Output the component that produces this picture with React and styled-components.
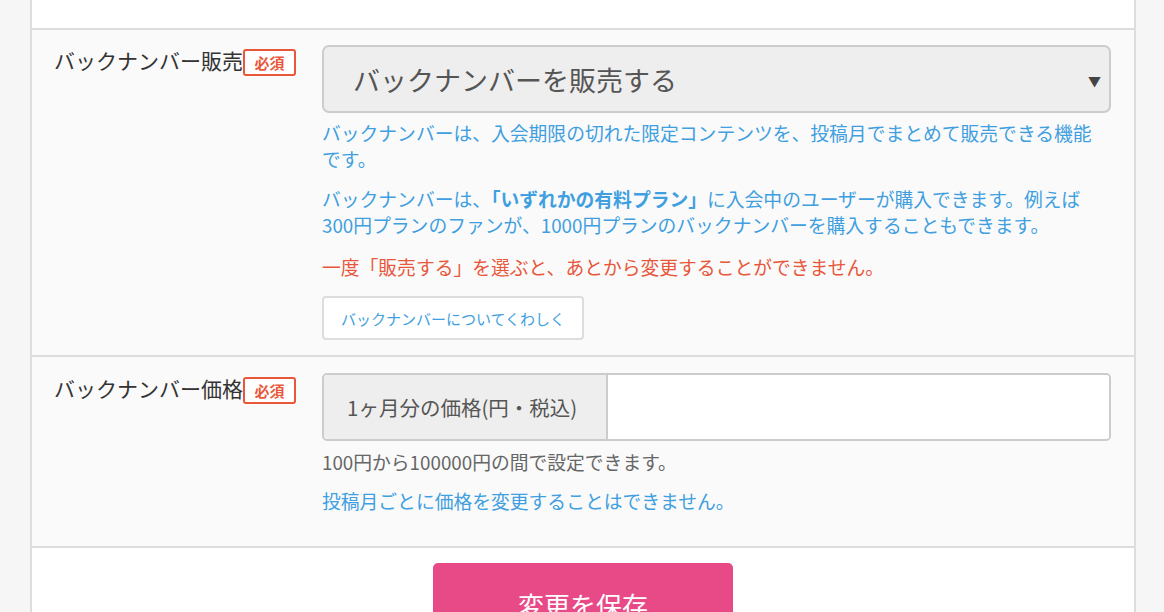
import React from "react";
import styled, { createGlobalStyle } from "styled-components";

const GlobalStyle = createGlobalStyle`
  html, body {
    margin: 0;
    padding: 0;
    background: #f6f6f6;
    font-family: "Noto Sans CJK JP", "Noto Sans", "Liberation Sans", sans-serif;
    color: #333;
  }
`;

const colors = {
  border: "#dddddd",
  blue: "#3f9fe0",
  red: "#e9573a",
  pink: "#e84a88",
  gray: "#666666",
  field: "#eeeeee"
};

const Panel = styled.div`
  box-sizing: border-box;
  width: 1106px;
  margin-left: 30px;
  background: #fff;
  border-left: 2px solid ${colors.border};
  border-right: 2px solid ${colors.border};
  min-height: 612px;
`;

const TopArea = styled.div`
  height: 28px;
  background: #fff;
  border-bottom: 2px solid ${colors.border};
`;

const FormRow = styled.div`
  display: grid;
  grid-template-columns: 290px 789px;
  background: #fafafa;
  border-bottom: 2px solid ${colors.border};
  padding: ${props => props.pad};
`;

const LabelCell = styled.div`
  padding-left: 22px;
  display: flex;
  align-items: flex-start;
  font-size: 21px;
  line-height: 30px;
  color: #333;
  white-space: nowrap;
`;

const Badge = styled.span`
  box-sizing: border-box;
  display: inline-flex;
  align-items: center;
  justify-content: center;
  width: 53px;
  height: 27px;
  margin-top: 4px;
  border: 2px solid ${colors.red};
  border-radius: 3px;
  background: #fff;
  color: ${colors.red};
  font-size: 15px;
  font-weight: 700;
  line-height: 1;
`;

const FieldCell = styled.div`
  display: flex;
  flex-direction: column;
  align-items: flex-start;
`;

const SelectBox = styled.div`
  box-sizing: border-box;
  width: 789px;
  height: 68px;
  display: flex;
  align-items: center;
  justify-content: space-between;
  padding: 0 8px 0 29px;
  background: ${colors.field};
  border: 2px solid #cccccc;
  border-radius: 7px;
  color: #555;
  font-size: 27px;
`;

const Caret = styled.span`
  font-size: 13px;
  color: #444;
  margin-top: 2px;
`;

const Note = styled.p`
  margin: ${props => props.gap}px 0 0;
  font-size: 18.8px;
  line-height: 26px;
  color: ${props => props.color || colors.blue};
  width: 780px;
`;

const Strong = styled.strong`
  font-weight: 700;
`;

const LinkButton = styled.button`
  box-sizing: border-box;
  margin-top: 16px;
  width: 262px;
  height: 44px;
  background: #fff;
  border: 2px solid ${colors.border};
  border-radius: 4px;
  color: ${colors.blue};
  font-family: inherit;
  font-size: 15px;
  padding: 0;
  cursor: pointer;
`;

const InputGroup = styled.div`
  box-sizing: border-box;
  width: 789px;
  height: 68px;
  display: flex;
  border: 2px solid #cccccc;
  border-radius: 5px;
  overflow: hidden;
  background: #fff;
`;

const Addon = styled.div`
  box-sizing: border-box;
  width: 284px;
  display: flex;
  align-items: center;
  padding-left: 23px;
  background: ${colors.field};
  border-right: 2px solid #cccccc;
  color: #555;
  font-size: 20.5px;
  white-space: nowrap;
`;

const PriceInput = styled.input`
  flex: 1;
  border: 0;
  outline: none;
  background: #fff;
  font-family: inherit;
  font-size: 19px;
  padding: 0 16px;
`;

const Footer = styled.div`
  display: flex;
  justify-content: center;
  padding-top: 15px;
  background: #fff;
`;

const SaveButton = styled.button`
  width: 300px;
  height: 64px;
  border: 0;
  border-radius: 5px;
  background: ${colors.pink};
  color: #fff;
  font-family: inherit;
  font-size: 26px;
  padding-top: 20px;
  cursor: pointer;
`;

export default function App() {
  return (
    <>
      <GlobalStyle />
      <Panel>
        <TopArea />
        <FormRow pad="15px 0 15px">
          <LabelCell>
            バックナンバー販売<Badge>必須</Badge>
          </LabelCell>
          <FieldCell>
            <SelectBox>
              <span>バックナンバーを販売する</span>
              <Caret>▼</Caret>
            </SelectBox>
            <Note gap={7}>
              バックナンバーは、入会期限の切れた限定コンテンツを、投稿月でまとめて販売できる機能です。
            </Note>
            <Note gap={14}>
              バックナンバーは、<Strong>「いずれかの有料プラン」</Strong>に入会中のユーザーが購入できます。例えば300円プランのファンが、1000円プランのバックナンバーを購入することもできます。
            </Note>
            <Note gap={16} color={colors.red}>
              一度「販売する」を選ぶと、あとから変更することができません。
            </Note>
            <LinkButton type="button">バックナンバーについてくわしく</LinkButton>
          </FieldCell>
        </FormRow>
        <FormRow pad="16px 0 32px">
          <LabelCell>
            バックナンバー価格<Badge>必須</Badge>
          </LabelCell>
          <FieldCell>
            <InputGroup>
              <Addon>1ヶ月分の価格(円・税込)</Addon>
              <PriceInput type="text" />
            </InputGroup>
            <Note gap={8} color={colors.gray}>
              100円から100000円の間で設定できます。
            </Note>
            <Note gap={13}>投稿月ごとに価格を変更することはできません。</Note>
          </FieldCell>
        </FormRow>
        <Footer>
          <SaveButton type="button">変更を保存</SaveButton>
        </Footer>
      </Panel>
    </>
  );
}
